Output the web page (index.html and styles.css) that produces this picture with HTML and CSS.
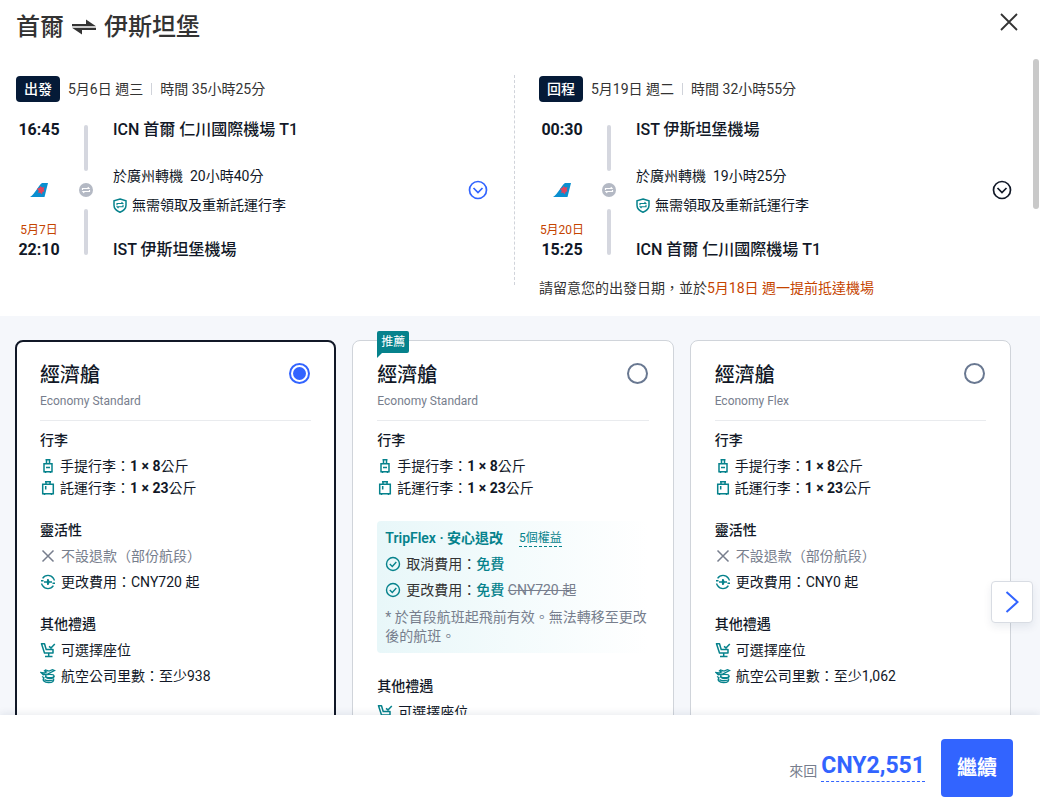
FILE: index.html
```html
<!DOCTYPE html>
<html lang="zh-Hant">
<head>
    <meta charset="UTF-8">
    <meta name="viewport" content="width=device-width, initial-scale=1.0">
    <title>首爾 ⇌ 伊斯坦堡</title>
    <link rel="stylesheet" href="styles.css">
</head>
<body>

<svg class="sprite" aria-hidden="true">
    <symbol id="i-tail" viewBox="0 0 18 14">
        <path d="M0 14C5 11 8 3 12 0h6l-3.500 14z" fill="#0a8fd0"/>
        <path d="M7 5.500l2.500-.5 1-2 1.500 1.500 2.500-.2-.8 2.200.8 1.800-2 .6-.5 2.600-2-1.900-2 .4.800-2z" fill="#e2435c"/>
    </symbol>
    <symbol id="i-stop" viewBox="0 0 14 14">
        <circle cx="7" cy="7" r="7" fill="#b4b9c4"/>
        <path d="M3.500 7V5.500H10L8.800 4M10.500 7v1.500H4L5.200 10" fill="none" stroke="#fff" stroke-width="1.200"/>
    </symbol>
    <symbol id="i-shield" viewBox="0 0 14 15">
        <path d="M7 1l6 1.700v4.500c0 3.300-2.500 5.600-6 7-3.500-1.400-6-3.700-6-7V2.700z" fill="none" stroke="#06828c" stroke-width="1.500"/>
        <path d="M4 7.200V5.500h5.800L8.500 4M10 6.800v1.900H4.200L5.500 10.200" fill="none" stroke="#06828c" stroke-width="1.100"/>
    </symbol>
    <symbol id="i-down" viewBox="0 0 20 20">
        <circle cx="10" cy="10" r="8.500" fill="none" stroke="currentColor" stroke-width="1.700"/>
        <path d="M5.500 8l4.500 4.500L14.500 8" fill="none" stroke="currentColor" stroke-width="1.700"/>
    </symbol>
    <symbol id="i-cabin" viewBox="0 0 16 16">
        <path d="M5.500 1.700h5M6.500 1.500v4M9.500 1.500v4M4 5.700h8v8H4zM5.500 13.500V15M10.500 13.500V15M6 9.500h4" fill="none" stroke="currentColor" stroke-width="1.500"/>
    </symbol>
    <symbol id="i-checked" viewBox="0 0 16 16">
        <path d="M5 1.700h6M6 1.500v3M10 1.500v3M2.700 4.200h10.600v9.500H2.700zM4.500 13.500V15M11.500 13.500V15M5.700 6v3.500" fill="none" stroke="currentColor" stroke-width="1.500"/>
    </symbol>
    <symbol id="i-cross" viewBox="0 0 16 16">
        <path d="M2.500 2.500l11 11M13.500 2.500l-11 11" fill="none" stroke="currentColor" stroke-width="1.500"/>
    </symbol>
    <symbol id="i-change" viewBox="0 0 16 16">
        <path d="M2.600 4.300A6.500 6.500 0 0 1 13.400 4.300M13.400 11.700A6.500 6.500 0 0 1 2.600 11.700M1 6.800h2.500M12.500 9.200H15M1.500 9.500l1.200 2.500M14.500 6.500l-1.200-2.500" fill="none" stroke="currentColor" stroke-width="1.400"/>
        <path d="M4 7.300h2.800L7.200 5h1.300l1 2.300H12v1.400H9.500l-1 2.300H7.200l-.4-2.300H4z" fill="currentColor"/>
    </symbol>
    <symbol id="i-ok" viewBox="0 0 16 16">
        <circle cx="8" cy="8" r="6.500" fill="none" stroke="currentColor" stroke-width="1.400"/>
        <path d="M4.800 8l2.500 2.400 4-4.300" fill="none" stroke="currentColor" stroke-width="1.400"/>
    </symbol>
    <symbol id="i-seat" viewBox="0 0 16 16">
        <path d="M1.500 1.700h3l1.700 5.800h6.800v3.500H4.500zM8.700 11v3.500M5 14.500h7.500M9 4.300l2 1.600 3.800-4" fill="none" stroke="currentColor" stroke-width="1.500" stroke-linejoin="round"/>
    </symbol>
    <symbol id="i-miles" viewBox="0 0 16 16">
        <path d="M1 4.500l2.200 2.200L8 5.800l6.500-3.300-2-.8L9 3 5.500 2l-1 .8L6.500 4 4 5z" fill="none" stroke="currentColor" stroke-width="1.300"/>
        <ellipse cx="9.800" cy="8" rx="4.200" ry="1.700" fill="none" stroke="currentColor" stroke-width="1.300"/>
        <path d="M14 8c0 1.500-1.500 2.500-4 2.500S5.500 9.800 5.500 8M4 10c-2 2 0 4.500 4.500 4.500s6-1.500 5-4M4.500 11.500c1.500 1.500 6 1.500 8.500.5M2 8.500l2.500 1.500" fill="none" stroke="currentColor" stroke-width="1.300"/>
    </symbol>
</svg>

<header class="header">
    <h1 class="title">首爾
        <svg class="swap" viewBox="0 0 24 16"><path d="M0 7.300V5h14V0.500l10 6.800zM24 8.700V11H10v4.500L0 8.700z" fill="#333"/></svg>
        伊斯坦堡</h1>
    <button class="close" type="button" aria-label="關閉">
        <svg viewBox="0 0 18 18"><path d="M1 1l16 16M17 1L1 17" stroke="#333" stroke-width="1.800"/></svg>
    </button>
</header>

<main class="content">
    <section class="flights">
        <article class="flight">
            <div class="flight-head">
                <span class="tag">出發</span>
                <span>5月6日 週三</span>
                <span class="sep"></span>
                <span>時間 35小時25分</span>
            </div>
            <div class="leg">
                <div class="times">
                    <strong class="time">16:45</strong>
                    <div class="between">
                        <svg class="airline"><use href="#i-tail"/></svg>
                        <span class="day">5月7日</span>
                    </div>
                    <strong class="time">22:10</strong>
                </div>
                <div class="track">
                    <span class="bar"></span>
                    <svg class="stop"><use href="#i-stop"/></svg>
                    <span class="bar"></span>
                </div>
                <div class="places">
                    <div class="airport">ICN 首爾 仁川國際機場 T1</div>
                    <div class="transfer">
                        <p>於廣州轉機&nbsp; 20小時40分</p>
                        <p class="through"><svg class="shield"><use href="#i-shield"/></svg>無需領取及重新託運行李</p>
                    </div>
                    <div class="airport">IST 伊斯坦堡機場</div>
                </div>
                <button class="expand active" type="button" aria-label="展開出發航班"><svg><use href="#i-down"/></svg></button>
            </div>
        </article>

        <article class="flight">
            <div class="flight-head">
                <span class="tag">回程</span>
                <span>5月19日 週二</span>
                <span class="sep"></span>
                <span>時間 32小時55分</span>
            </div>
            <div class="leg">
                <div class="times">
                    <strong class="time">00:30</strong>
                    <div class="between">
                        <svg class="airline"><use href="#i-tail"/></svg>
                        <span class="day">5月20日</span>
                    </div>
                    <strong class="time">15:25</strong>
                </div>
                <div class="track">
                    <span class="bar"></span>
                    <svg class="stop"><use href="#i-stop"/></svg>
                    <span class="bar"></span>
                </div>
                <div class="places">
                    <div class="airport">IST 伊斯坦堡機場</div>
                    <div class="transfer">
                        <p>於廣州轉機&nbsp; 19小時25分</p>
                        <p class="through"><svg class="shield"><use href="#i-shield"/></svg>無需領取及重新託運行李</p>
                    </div>
                    <div class="airport">ICN 首爾 仁川國際機場 T1</div>
                </div>
                <button class="expand" type="button" aria-label="展開回程航班"><svg><use href="#i-down"/></svg></button>
            </div>
            <p class="notice">請留意您的出發日期，並於<span>5月18日 週一提前抵達機場</span></p>
        </article>
    </section>

    <section class="fares">
        <article class="card selected">
            <div class="card-head">
                <label class="cabin" for="fare1">經濟艙</label>
                <input class="radio" type="radio" name="fare" id="fare1" checked>
            </div>
            <p class="fare-name">Economy Standard</p>
            <h3>行李</h3>
            <ul class="bags">
                <li><svg><use href="#i-cabin"/></svg><span>手提行李：<b>1 × 8</b>公斤</span></li>
                <li><svg><use href="#i-checked"/></svg><span>託運行李：<b>1 × 23</b>公斤</span></li>
            </ul>
            <h3>靈活性</h3>
            <ul>
                <li class="muted"><svg><use href="#i-cross"/></svg>不設退款（部份航段）</li>
                <li><svg><use href="#i-change"/></svg>更改費用：CNY720 起</li>
            </ul>
            <h3>其他禮遇</h3>
            <ul>
                <li><svg><use href="#i-seat"/></svg>可選擇座位</li>
                <li><svg><use href="#i-miles"/></svg>航空公司里數：至少938</li>
            </ul>
        </article>

        <article class="card">
            <span class="recommend">推薦</span>
            <div class="card-head">
                <label class="cabin" for="fare2">經濟艙</label>
                <input class="radio" type="radio" name="fare" id="fare2">
            </div>
            <p class="fare-name">Economy Standard</p>
            <h3>行李</h3>
            <ul class="bags">
                <li><svg><use href="#i-cabin"/></svg><span>手提行李：<b>1 × 8</b>公斤</span></li>
                <li><svg><use href="#i-checked"/></svg><span>託運行李：<b>1 × 23</b>公斤</span></li>
            </ul>
            <div class="flex-box">
                <div class="flex-title"><strong>TripFlex · 安心退改</strong><a href="#">5個權益</a></div>
                <ul>
                    <li><svg><use href="#i-ok"/></svg><span>取消費用：<em>免費</em></span></li>
                    <li><svg><use href="#i-ok"/></svg><span>更改費用：<em>免費</em> <s>CNY720 起</s></span></li>
                </ul>
                <p class="terms">* 於首段航班起飛前有效。無法轉移至更改後的航班。</p>
            </div>
            <h3>其他禮遇</h3>
            <ul>
                <li><svg><use href="#i-seat"/></svg>可選擇座位</li>
            </ul>
        </article>

        <article class="card">
            <div class="card-head">
                <label class="cabin" for="fare3">經濟艙</label>
                <input class="radio" type="radio" name="fare" id="fare3">
            </div>
            <p class="fare-name">Economy Flex</p>
            <h3>行李</h3>
            <ul class="bags">
                <li><svg><use href="#i-cabin"/></svg><span>手提行李：<b>1 × 8</b>公斤</span></li>
                <li><svg><use href="#i-checked"/></svg><span>託運行李：<b>1 × 23</b>公斤</span></li>
            </ul>
            <h3>靈活性</h3>
            <ul>
                <li class="muted"><svg><use href="#i-cross"/></svg>不設退款（部份航段）</li>
                <li><svg><use href="#i-change"/></svg>更改費用：CNY0 起</li>
            </ul>
            <h3>其他禮遇</h3>
            <ul>
                <li><svg><use href="#i-seat"/></svg>可選擇座位</li>
                <li><svg><use href="#i-miles"/></svg>航空公司里數：至少1,062</li>
            </ul>
        </article>

        <button class="next" type="button" aria-label="下一個">
            <svg viewBox="0 0 20 20"><path d="M5 1l10 9-10 9" fill="none" stroke="#3264ff" stroke-width="1.800"/></svg>
        </button>
    </section>
</main>
<div class="thumb"></div>

<footer class="footer">
    <span class="trip">來回</span>
    <span class="price">CNY2,551</span>
    <button class="continue" type="button">繼續</button>
</footer>

</body>
</html>
```
FILE: styles.css
```css
* {
    box-sizing: border-box;
    margin: 0;
    padding: 0;
}
body {
    position: relative;
    display: flex;
    flex-direction: column;
    height: 100vh;
    overflow: hidden;
    background: #fff;
    color: #111827;
    font-family: Roboto, "Noto Sans CJK TC", sans-serif;
    font-size: 14px;
    line-height: 22px;
}
button {
    border: 0;
    background: none;
    font-family: inherit;
    cursor: pointer;
}
svg {
    display: block;
    flex: none;
}
ul {
    list-style: none;
}
.sprite {
    position: absolute;
    width: 0;
    height: 0;
}

/* header */
.header {
    display: flex;
    justify-content: space-between;
    align-items: flex-start;
    height: 57px;
    flex: none;
    padding: 11px 22px 0 16px;
}
.title {
    display: flex;
    align-items: center;
    gap: 8px;
    color: #333;
    font-size: 24px;
    font-weight: 500;
    line-height: 32px;
}
.swap {
    width: 24px;
    height: 16px;
}
.close {
    padding: 2px 0;
}
.close svg {
    width: 18px;
    height: 18px;
}

/* flights */
.content {
    flex: 1;
    min-height: 0;
    overflow-y: auto;
    scrollbar-width: none;
}
.flights {
    display: grid;
    grid-template-columns: 1fr 1fr;
    gap: 24px;
    align-items: start;
    padding: 18px 2px 17px 16px;
}
.flight:first-child {
    padding-bottom: 23px;
    border-right: 1px dashed #d0d3da;
}
.flight-head {
    display: flex;
    align-items: center;
    gap: 8px;
    height: 28px;
    color: #333;
}
.tag {
    padding: 2px 8px;
    border-radius: 4px;
    background: #051a37;
    color: #fff;
    font-weight: 500;
}
.sep {
    width: 1px;
    height: 12px;
    background: #d0d3da;
}
.leg {
    display: flex;
    margin-top: 15px;
}
.times {
    width: 46px;
    text-align: center;
}
.time {
    display: block;
    font-size: 16px;
    line-height: 24px;
}
.between {
    display: flex;
    flex-direction: column;
    align-items: center;
    justify-content: space-between;
    height: 96px;
    padding-top: 41px;
}
.airline {
    width: 18px;
    height: 14px;
}
.day {
    color: #c54400;
    font-size: 12px;
    line-height: 16px;
    white-space: nowrap;
}
.track {
    display: flex;
    flex-direction: column;
    align-items: center;
    gap: 12px;
    margin: 7px 20px 7px 17px;
}
.bar {
    flex: 1;
    width: 4px;
    border-radius: 2px;
    background: #d5d7df;
}
.stop {
    width: 14px;
    height: 14px;
}
.places {
    flex: 1;
}
.airport {
    font-size: 16px;
    font-weight: 500;
    line-height: 24px;
}
.transfer {
    height: 96px;
    padding-top: 23px;
}
.through {
    display: flex;
    align-items: center;
    gap: 5px;
    margin-top: 7px;
}
.shield {
    width: 14px;
    height: 15px;
}
.expand {
    align-self: center;
    margin-right: 26px;
    color: #111827;
}
.expand.active {
    color: #3264ff;
}
.expand svg {
    width: 20px;
    height: 20px;
}
.notice {
    margin-top: 15px;
    color: #333;
}
.notice span {
    color: #c54400;
}

/* fare cards */
.fares {
    position: relative;
    display: grid;
    grid-template-columns: repeat(3, 1fr);
    gap: 16px;
    padding: 24px 29px 24px 15px;
    background: #f5f7fb;
}
.card {
    position: relative;
    padding: 20px 24px;
    border: 1px solid #d0d4da;
    border-radius: 8px;
    background: #fff;
}
.card.selected {
    padding: 19px 23px;
    border: 2px solid #111827;
}
.card-head {
    display: flex;
    justify-content: space-between;
    align-items: flex-start;
    line-height: 28px;
}
.cabin {
    font-size: 20px;
    font-weight: 500;
}
.radio {
    display: grid;
    place-items: center;
    width: 21px;
    height: 21px;
    margin: 2px 1px 0 0;
    appearance: none;
    border: 2px solid #697891;
    border-radius: 50%;
    background: #fff;
}
.radio:checked {
    border-color: #3264ff;
}
.radio:checked::before {
    content: "";
    width: 13px;
    height: 13px;
    border-radius: 50%;
    background: #3264ff;
}
.fare-name {
    margin: 3px 0 8px;
    padding-bottom: 10px;
    border-bottom: 1px solid #e9ebee;
    color: #777e8d;
    font-size: 12px;
    line-height: 18px;
}
.card h3 {
    margin-bottom: 4px;
    font-size: 14px;
    font-weight: 500;
}
.card ul {
    display: grid;
    gap: 4px;
    margin-bottom: 20px;
}
.card .bags {
    gap: 0;
}
.card li {
    display: flex;
    align-items: center;
    gap: 5px;
}
.card .bags li {
    gap: 4px;
}
.card li svg {
    width: 16px;
    height: 16px;
    color: #06828c;
}
.card .muted,
.card .muted svg {
    color: #777e8d;
}
.recommend {
    position: absolute;
    top: -10px;
    left: 24px;
    padding: 0 4px;
    border-radius: 2px 2px 2px 0;
    background: #06828c;
    color: #fff;
    font-size: 12px;
}
.recommend::after {
    content: "";
    position: absolute;
    top: 100%;
    left: 0;
    border-top: 5px solid #06828c;
    border-right: 5px solid transparent;
}
.card .flex-box {
    margin: 22px 0;
    padding: 6px 0 7px 8px;
    border-radius: 4px;
    background: linear-gradient(90deg, #e8f7f9, #fff);
    color: #333;
}
.flex-title {
    display: flex;
    align-items: center;
    gap: 16px;
    margin-bottom: 4px;
    color: #06828c;
}
.flex-title strong {
    font-weight: 600;
}
.flex-title a {
    border-bottom: 1px dashed #06828c;
    color: #06828c;
    font-size: 12px;
    line-height: 16px;
    text-decoration: none;
}
.card .flex-box ul {
    margin-bottom: 7px;
}
.flex-box em {
    color: #06828c;
    font-style: normal;
    font-weight: 500;
}
.flex-box s,
.terms {
    color: #777e8d;
}
.terms {
    line-height: 19px;
}
.next {
    position: absolute;
    top: 265px;
    right: 7px;
    display: grid;
    place-items: center;
    width: 42px;
    height: 42px;
    border: 1px solid #d8dce3;
    border-radius: 4px;
    background: #fff;
    box-shadow: 0 4px 8px rgba(15, 41, 77, 0.08);
}
.next svg {
    width: 22px;
    height: 22px;
}
.thumb {
    position: absolute;
    top: 59px;
    right: 1px;
    width: 6px;
    height: 150px;
    border-radius: 3px;
    background: #c9c9c9;
}

/* footer */
.footer {
    position: relative;
    display: flex;
    justify-content: flex-end;
    align-items: center;
    flex: none;
    padding: 24px 27px 6px 16px;
    background: #fff;
    box-shadow: 0 -1px 8px rgba(15, 41, 77, 0.1);
}
.trip {
    margin: 6px 4px 0 0;
    color: #777e8d;
}
.price {
    margin: 0 16px 4px 0;
    border-bottom: 1px dashed #3264ff;
    color: #3264ff;
    font-size: 23px;
    font-weight: 700;
    line-height: 30px;
}
.continue {
    padding: 14px 16px;
    border-radius: 4px;
    background: #3264ff;
    color: #fff;
    font-size: 20px;
    font-weight: 700;
    line-height: 30px;
}
```
